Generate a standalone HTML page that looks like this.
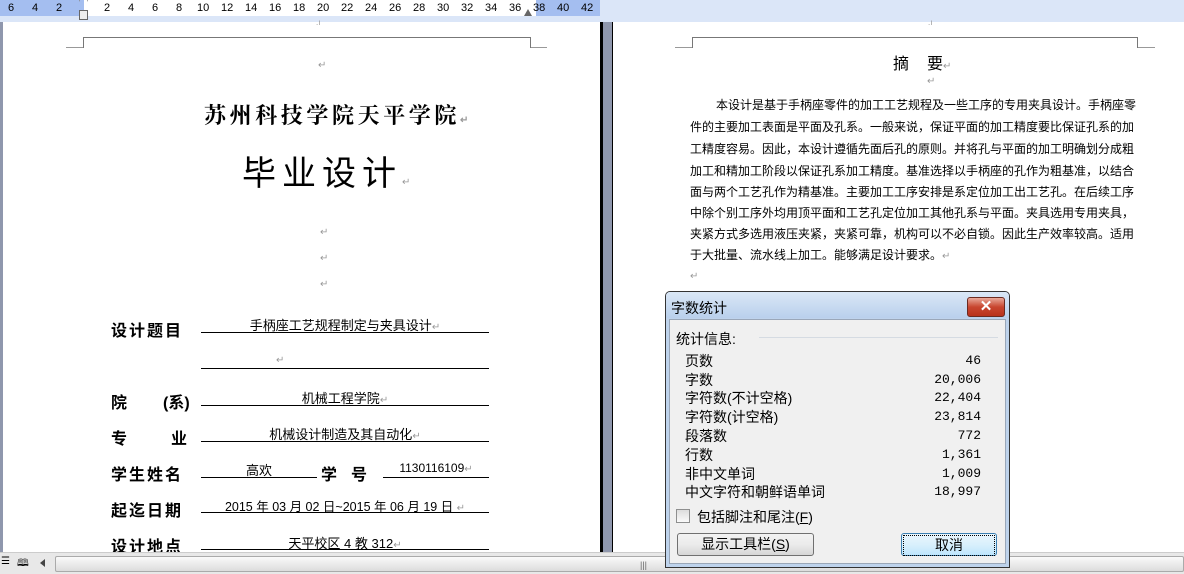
<!DOCTYPE html>
<html><head><meta charset="utf-8"><style>
*{margin:0;padding:0;box-sizing:border-box}
body{width:1184px;height:574px;overflow:hidden;position:relative;background:#fff;font-family:"Liberation Sans","Noto Sans CJK SC",sans-serif;color:#000}
.a{position:absolute;white-space:nowrap}
.cj{font-family:"Liberation Sans","Noto Sans CJK SC",sans-serif}
.se{font-family:"Liberation Serif","Noto Serif CJK SC",serif}
.rm{color:#999;font-size:10px}
.ul{position:absolute;height:1px;background:#000}
.lbl{position:absolute;font-weight:bold;font-size:16px;white-space:nowrap}
.val{position:absolute;font-size:13px;text-align:center;white-space:nowrap}
.pl{position:absolute;left:690px;width:444px;font-size:12px;text-align:justify;text-align-last:justify;white-space:nowrap;height:16px;line-height:16px}
.dr{position:absolute;left:685px;width:296px;font-size:14px;height:18px;line-height:18px}
.dr span{float:right;font-family:"Liberation Mono","Noto Sans CJK SC",monospace;font-size:13px}
</style></head><body>
<!-- ruler -->
<div class="a" style="left:0;top:0;width:1184px;height:22px;background:#dbe6f8"></div>
<div class="a" style="left:0;top:0;width:600px;height:16px;background:#a4bef0"></div>
<div class="a" style="left:84px;top:0;width:452px;height:16px;background:#fff"></div>
<div class="a" style="left:0;top:1px;width:600px;height:14px;font-size:11px;line-height:14px">
<span class="a" style="left:8px">6</span><span class="a" style="left:32px">4</span><span class="a" style="left:56px">2</span>
<span class="a" style="left:104px">2</span><span class="a" style="left:128px">4</span><span class="a" style="left:152px">6</span><span class="a" style="left:176px">8</span>
<span class="a" style="left:197px">10</span><span class="a" style="left:221px">12</span><span class="a" style="left:245px">14</span><span class="a" style="left:269px">16</span><span class="a" style="left:293px">18</span><span class="a" style="left:317px">20</span><span class="a" style="left:341px">22</span><span class="a" style="left:365px">24</span><span class="a" style="left:389px">26</span><span class="a" style="left:413px">28</span><span class="a" style="left:437px">30</span><span class="a" style="left:461px">32</span><span class="a" style="left:485px">34</span><span class="a" style="left:509px">36</span><span class="a" style="left:533px">38</span><span class="a" style="left:557px">40</span><span class="a" style="left:581px">42</span>
</div>
<div class="a" style="left:79px;top:10px;width:9px;height:10px;border:1px solid #666;background:#eee"></div>
<div class="a" style="left:79px;top:0;width:9px;height:9px;border-left:1px solid #888;border-right:1px solid #888;clip-path:polygon(0 0,100% 0,50% 100%)"></div>
<div class="a" style="left:524px;top:9px;width:8px;height:7px;background:#666;clip-path:polygon(50% 0,100% 100%,0 100%)"></div>
<!-- page frames -->
<div class="a" style="left:0;top:22px;width:3px;height:530px;background:#8f97ad"></div>
<div class="a" style="left:600px;top:22px;width:3px;height:530px;background:#000"></div>
<div class="a" style="left:603px;top:22px;width:9px;height:530px;background:#8f97ad"></div>
<div class="a" style="left:612px;top:22px;width:1px;height:530px;background:#000"></div>
<!-- header corner marks -->
<div class="a" style="left:66px;top:47px;width:17px;height:1px;background:#999"></div>
<div class="a" style="left:83px;top:37px;width:448px;height:11px;border:1px solid #777;border-bottom:none"></div>
<div class="a" style="left:531px;top:47px;width:16px;height:1px;background:#999"></div>
<div class="a" style="left:675px;top:47px;width:17px;height:1px;background:#999"></div>
<div class="a" style="left:692px;top:37px;width:446px;height:11px;border:1px solid #777;border-bottom:none"></div>
<div class="a" style="left:1138px;top:47px;width:17px;height:1px;background:#999"></div>
<div class="a rm" style="left:316px;top:18px;font-size:8px">.ı</div>
<div class="a rm" style="left:928px;top:18px;font-size:8px">.ı</div>
<!-- left page -->
<div class="a rm" style="left:318px;top:60px">↵</div>
<div class="a se" style="left:204px;top:99px;font-size:22px;font-weight:bold;letter-spacing:3.6px">苏州科技学院天平学院<span class="rm" style="letter-spacing:0">↵</span></div>
<div class="a cj" style="left:242px;top:152px;font-size:34px;letter-spacing:6px;line-height:44px">毕业设计<span class="rm" style="letter-spacing:0">↵</span></div>
<div class="a rm" style="left:320px;top:227px">↵</div>
<div class="a rm" style="left:320px;top:253px">↵</div>
<div class="a rm" style="left:320px;top:279px">↵</div>

<div class="lbl" style="left:111px;top:317px;letter-spacing:2px">设计题目</div>
<div class="val" style="left:201px;top:315px;width:288px">手柄座工艺规程制定与夹具设计<span class="rm">↵</span></div>
<div class="ul" style="left:201px;top:332px;width:288px"></div>
<div class="a rm" style="left:276px;top:355px">↵</div>
<div class="ul" style="left:201px;top:368px;width:288px"></div>
<div class="lbl" style="left:111px;top:389px">院<span style="margin-left:36px">(系)</span></div>
<div class="val" style="left:201px;top:388px;width:288px">机械工程学院<span class="rm">↵</span></div>
<div class="ul" style="left:201px;top:405px;width:288px"></div>
<div class="lbl" style="left:111px;top:425px">专<span style="margin-left:44px">业</span></div>
<div class="val" style="left:201px;top:424px;width:288px">机械设计制造及其自动化<span class="rm">↵</span></div>
<div class="ul" style="left:201px;top:441px;width:288px"></div>
<div class="lbl" style="left:111px;top:461px;letter-spacing:2px">学生姓名</div>
<div class="val" style="left:201px;top:460px;width:116px">高欢</div>
<div class="ul" style="left:201px;top:477px;width:116px"></div>
<div class="lbl" style="left:321px;top:461px">学<span style="margin-left:14px">号</span></div>
<div class="val" style="left:383px;top:461px;width:106px;font-size:12px">1130116109<span class="rm">↵</span></div>
<div class="ul" style="left:383px;top:477px;width:106px"></div>
<div class="lbl" style="left:111px;top:497px;letter-spacing:2px">起迄日期</div>
<div class="val" style="left:201px;top:496px;width:288px;font-size:12.5px">2015 年 03 月 02 日~2015 年 06 月 19 日 <span class="rm">↵</span></div>
<div class="ul" style="left:201px;top:512px;width:288px"></div>
<div class="lbl" style="left:111px;top:533px;letter-spacing:2px">设计地点</div>
<div class="val" style="left:201px;top:533px;width:288px">天平校区 4 教 312<span class="rm">↵</span></div>
<div class="ul" style="left:201px;top:549px;width:288px"></div>
<!-- right page -->
<div class="a" style="left:893px;top:50px;font-size:16px">摘<span style="margin-left:18px">要</span><span class="rm">↵</span></div>
<div class="a rm" style="left:927px;top:76px">↵</div>
<div class="pl" style="left:716px;width:418px;top:97px">本设计是基于手柄座零件的加工工艺规程及一些工序的专用夹具设计。手柄座零</div>
<div class="pl" style="top:119px">件的主要加工表面是平面及孔系。一般来说，保证平面的加工精度要比保证孔系的加</div>
<div class="pl" style="top:141px">工精度容易。因此，本设计遵循先面后孔的原则。并将孔与平面的加工明确划分成粗</div>
<div class="pl" style="top:163px">加工和精加工阶段以保证孔系加工精度。基准选择以手柄座的孔作为粗基准，以结合</div>
<div class="pl" style="top:184px">面与两个工艺孔作为精基准。主要加工工序安排是系定位加工出工艺孔。在后续工序</div>
<div class="pl" style="top:205px">中除个别工序外均用顶平面和工艺孔定位加工其他孔系与平面。夹具选用专用夹具，</div>
<div class="pl" style="top:226px">夹紧方式多选用液压夹紧，夹紧可靠，机构可以不必自锁。因此生产效率较高。适用</div>
<div class="pl" style="top:247px;text-align:left;text-align-last:left">于大批量、流水线上加工。能够满足设计要求。<span class="rm">↵</span></div>
<div class="a rm" style="left:690px;top:271px">↵</div>
<!-- bottom scrollbar -->
<div class="a" style="left:0;top:552px;width:1184px;height:22px;background:#e8e8e8;border-top:1px solid #ccc"></div>
<div class="a" style="left:55px;top:556px;width:1129px;height:16px;background:linear-gradient(#fafafa,#dcdcdc);border:1px solid #aaa;border-radius:2px"></div>
<div class="a" style="left:1px;top:556px;font-size:10px">☰</div>
<div class="a" style="left:17px;top:556px;font-size:10px">🕮</div>
<div class="a" style="left:40px;top:559px;width:0;height:0;border:4px solid transparent;border-right:5px solid #444;border-left:none"></div>
<div class="a" style="left:640px;top:560px;font-size:9px;color:#666">|||</div>
<!-- dialog -->
<div class="a" style="left:665px;top:291px;width:345px;height:277px;border:1px solid #333;border-radius:5px 5px 0 0;background:#bed3ec"></div>
<div class="a" style="left:666px;top:292px;width:343px;height:26px;background:linear-gradient(#dae7f6,#b9d0ec);border-radius:4px 4px 0 0"></div>
<div class="a" style="left:671px;top:298px;font-size:14px">字数统计</div>
<div class="a" style="left:967px;top:297px;width:38px;height:20px;border:1px solid #6b2a20;border-radius:3px;background:linear-gradient(#e9a899,#c8452f 50%,#b8321c);color:#fff;font-weight:bold;font-size:15px;text-align:center;line-height:18px">✕</div>
<div class="a" style="left:669px;top:319px;width:337px;height:245px;background:#f0f0f0;border:1px solid #9aa7b8"></div>
<div class="a" style="left:676px;top:329px;font-size:14px">统计信息:</div>
<div class="a" style="left:759px;top:337px;width:239px;height:1px;background:#d5dbe2"></div>
<div class="dr" style="top:352px">页数<span>46</span></div>
<div class="dr" style="top:371px">字数<span>20,006</span></div>
<div class="dr" style="top:389px">字符数(不计空格)<span>22,404</span></div>
<div class="dr" style="top:408px">字符数(计空格)<span>23,814</span></div>
<div class="dr" style="top:427px">段落数<span>772</span></div>
<div class="dr" style="top:446px">行数<span>1,361</span></div>
<div class="dr" style="top:465px">非中文单词<span>1,009</span></div>
<div class="dr" style="top:483px">中文字符和朝鲜语单词<span>18,997</span></div>
<div class="a" style="left:676px;top:509px;width:14px;height:14px;border:1px solid #8e8f8f;background:linear-gradient(#ddd,#fafafa)"></div>
<div class="a" style="left:697px;top:507px;font-size:14px">包括脚注和尾注(<u>F</u>)</div>
<div class="a" style="left:677px;top:533px;width:137px;height:23px;border:1px solid #707070;border-radius:3px;background:linear-gradient(#f2f2f2,#ebebeb 50%,#d6d6d6);font-size:14px;text-align:center;line-height:21px">显示工具栏(<u>S</u>)</div>
<div class="a" style="left:901px;top:533px;width:96px;height:23px;border:1px solid #3c7fb1;border-radius:3px;background:linear-gradient(#eaf6fd,#d9f0fc 50%,#bee6fd);font-size:14px;text-align:center;line-height:19px"><div style="margin:1px;border:1px dotted #000">取消</div></div>
</body></html>
